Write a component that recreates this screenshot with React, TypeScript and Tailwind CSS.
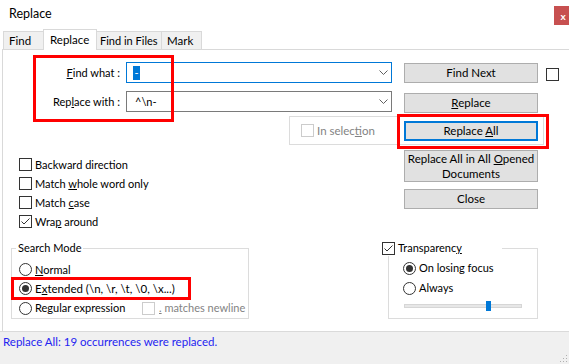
import React from 'react'

function Check({ checked = false, disabled = false }: { checked?: boolean; disabled?: boolean }) {
  return (
    <span
      className={`flex h-[13px] w-[13px] shrink-0 items-center justify-center border bg-white ${
        disabled ? 'border-[#cccccc]' : 'border-[#333333]'
      }`}
    >
      {checked && (
        <svg width="11" height="11" viewBox="0 0 11 11">
          <path d="M1.5 5.5 L4 8 L9.5 2.5" fill="none" stroke="#333333" strokeWidth="1" />
        </svg>
      )}
    </span>
  )
}

function Radio({ checked = false }: { checked?: boolean }) {
  return (
    <span className="flex h-[13px] w-[13px] shrink-0 items-center justify-center rounded-full border border-[#333333] bg-white">
      {checked && <span className="h-[7px] w-[7px] rounded-full bg-[#333333]" />}
    </span>
  )
}

function Chevron() {
  return (
    <svg width="9" height="5" viewBox="0 0 9 5" className="shrink-0">
      <polyline points="0.5,0.5 4.5,4.5 8.5,0.5" fill="none" stroke="#606060" strokeWidth="1" />
    </svg>
  )
}

function Btn({ children, focused = false, tall = false }: { children: React.ReactNode; focused?: boolean; tall?: boolean }) {
  return (
    <div
      className={`flex w-[134px] items-center justify-center bg-[#e1e1e1] text-center text-[11.5px] ${
        tall ? 'h-[32px] leading-[15px]' : 'h-[20px]'
      } ${focused ? 'border-2 border-[#0078d7]' : 'border border-[#adadad]'}`}
    >
      {children}
    </div>
  )
}

const options = [
  { label: <>Backward direction</>, checked: false },
  { label: <>Match <span className="underline">w</span>hole word only</>, checked: false },
  { label: <>Match <span className="underline">c</span>ase</>, checked: false },
  { label: <>Wra<span className="underline">p</span> around</>, checked: true },
]

export default function App() {
  return (
    <div className="relative h-[364px] w-[569px] overflow-hidden bg-white font-['Lato',sans-serif] text-[11px] leading-[16px] text-black">
      {/* title bar */}
      <div className="flex h-[29px] items-start justify-between">
        <span className="ml-[9px] mt-[6px] text-[12.5px]">Replace</span>
        <div className="mt-[6px] flex h-[19px] w-[15px] items-center justify-center bg-[#c75050] pl-[3px] text-[10px] font-bold leading-none text-white">
          x
        </div>
      </div>

      {/* tabs */}
      <div className="flex h-[20px] items-end pl-[3px] text-[11.5px]">
        <div className="flex h-[18px] w-[40px] items-center border-l border-t border-[#d9d9d9] bg-[#f0f0f0] pl-[5px]">Find</div>
        <div className="relative z-10 -mb-px flex h-[21px] w-[54px] items-center border-x border-t border-[#d9d9d9] bg-white pl-[6px]">
          Replace
        </div>
        <div className="flex h-[18px] w-[65px] items-center whitespace-nowrap border-r border-t border-[#d9d9d9] bg-[#f0f0f0] pl-[3px] text-[11px]">Find in Files</div>
        <div className="flex h-[18px] w-[40px] items-center border-r border-t border-[#d9d9d9] bg-[#f0f0f0] pl-[5px]">Mark</div>
      </div>

      {/* tab page */}
      <div className="ml-[2px] h-[282px] border-l border-t border-[#d9d9d9]">
        <div className="flex">
          <div className="w-[401px] shrink-0">
            <div className="mt-[12px] flex h-[21px] items-center">
              <div className="w-[117px] text-right">
                <span className="underline">F</span>ind what :
              </div>
              <div className="ml-[6px] flex h-[21px] w-[266px] items-center justify-between border border-[#0078d7] pl-[6px] pr-[3px]">
                <span className="flex h-[14px] w-[7px] items-center justify-center bg-[#0078d7] text-white">-</span>
                <Chevron />
              </div>
            </div>
            <div className="mt-[8px] flex h-[21px] items-center">
              <div className="w-[117px] text-right">
                Rep<span className="underline">l</span>ace with :
              </div>
              <div className="ml-[6px] flex h-[21px] w-[266px] items-center justify-between border border-[#7a7a7a] pl-[8px] pr-[3px]">
                <span>^\n-</span>
                <Chevron />
              </div>
            </div>
            <div className="ml-[286px] mt-[4px] flex h-[29px] w-[255px] items-center gap-[3px] border border-[#dcdcdc] pl-[11px] text-[11.5px] text-[#838383]">
              <Check disabled />
              <span>
                In selec<span className="underline">t</span>ion
              </span>
            </div>
            <div className="ml-[16px] mt-[10px]">
              {options.map((o, i) => (
                <div key={i} className="flex h-[19px] items-center gap-[3px]">
                  <Check checked={o.checked} />
                  <span>{o.label}</span>
                </div>
              ))}
            </div>
          </div>

          <div className="mt-[13px] flex w-[134px] shrink-0 flex-col">
            <Btn>Find Next</Btn>
            <div className="mt-[10px]">
              <Btn>
                <span>
                  <span className="underline">R</span>eplace
                </span>
              </Btn>
            </div>
            <div className="mt-[8px]">
              <Btn focused>
                <span>
                  Replace <span className="underline">A</span>ll
                </span>
              </Btn>
            </div>
            <div className="mt-[9px]">
              <Btn tall>
                <span>
                  Replace All in All <span className="underline">O</span>pened
                  <br />
                  Documents
                </span>
              </Btn>
            </div>
            <div className="mt-[7px]">
              <Btn>Close</Btn>
            </div>
          </div>

          <div className="ml-[8px] mt-[18px]">
            <Check />
          </div>
        </div>

        {/* bottom groups */}
        <div className="mt-[9px] flex">
          <fieldset className="ml-[8px] h-[79px] w-[238px] border border-[#dcdcdc]">
            <legend className="ml-[4px] px-[2px] leading-[16px]">Search Mode</legend>
            <div className="pl-[7px] pt-[4px]">
              <div className="flex h-[19px] items-center gap-[3px]">
                <Radio />
                <span>
                  <span className="underline">N</span>ormal
                </span>
              </div>
              <div className="flex h-[19px] items-center gap-[3px] text-[11.5px]">
                <Radio checked />
                <span>
                  E<span className="underline">x</span>tended (\n, \r, \t, \0, \x...)
                </span>
              </div>
              <div className="flex h-[20px] items-center whitespace-nowrap">
                <div className="flex w-[123px] shrink-0 items-center gap-[3px]">
                  <Radio />
                  <span>
                    Re<span className="underline">g</span>ular expression
                  </span>
                </div>
                <div className="flex items-center gap-[4px] text-[#838383]">
                  <Check disabled />
                  <span>
                    <span className="underline">.</span> matches newline
                  </span>
                </div>
              </div>
            </div>
          </fieldset>

          <fieldset className="ml-[139px] h-[79px] w-[150px] border border-[#dcdcdc]">
            <legend className="-ml-[7px] flex h-[16px] w-[120px] items-center gap-[3px]">
              <Check checked />
              <span>
                Transparenc<span className="underline">y</span>
              </span>
            </legend>
            <div className="pl-[14px] pt-[2px]">
              <div className="flex h-[20px] items-center gap-[3px]">
                <Radio checked />
                <span>On losing focus</span>
              </div>
              <div className="flex h-[20px] items-center gap-[3px]">
                <Radio />
                <span>Always</span>
              </div>
              <div className="relative ml-[1px] mt-[6px] h-[4px] w-[118px] border border-[#d6d6d6] bg-[#e7e7e7]">
                <div className="absolute left-[81px] top-[-4px] h-[10px] w-[5px] bg-[#0078d7]" />
              </div>
            </div>
          </fieldset>
        </div>
      </div>

      {/* status bar */}
      <div className="relative h-[33px] border-t border-[#dadada] bg-[#f0f0f0] pl-[3px] pt-[2px] text-[11.5px] text-[#2424f0]">
        Replace All: 19 occurrences were replaced.
        <svg width="8" height="8" viewBox="0 0 8 8" className="absolute bottom-[1px] right-[1px]">
          <rect x="6" y="0" width="1" height="1" fill="#b0b0b0" />
          <rect x="3" y="3" width="1" height="1" fill="#b0b0b0" />
          <rect x="6" y="3" width="1" height="1" fill="#b0b0b0" />
          <rect x="0" y="6" width="1" height="1" fill="#b0b0b0" />
          <rect x="3" y="6" width="1" height="1" fill="#b0b0b0" />
          <rect x="6" y="6" width="1" height="1" fill="#b0b0b0" />
        </svg>
      </div>

      {/* annotation boxes */}
      <div className="absolute left-[33px] top-[55px] h-[67px] w-[141px] border-[3px] border-[#ff0000]" />
      <div className="absolute left-[397px] top-[114px] h-[35px] w-[152px] border-[3px] border-[#ff0000]" />
      <div className="absolute left-[11px] top-[277px] h-[23px] w-[180px] border-[3px] border-[#ff0000]" />
    </div>
  )
}
